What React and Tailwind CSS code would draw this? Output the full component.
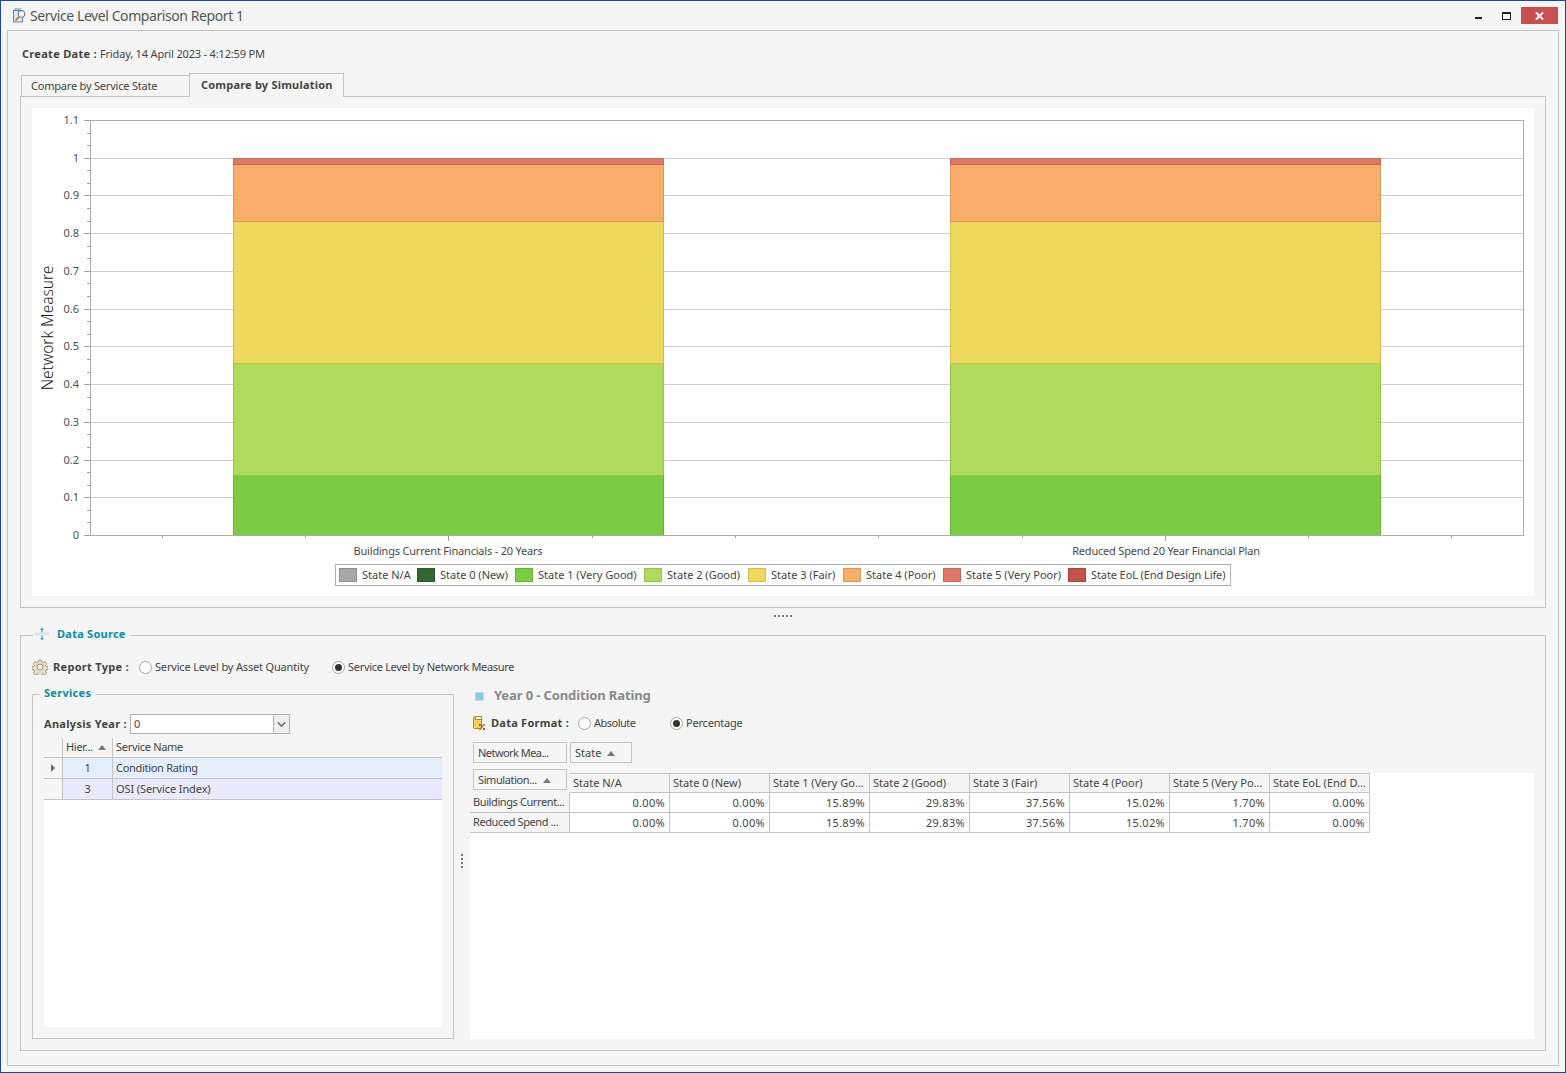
import { ChevronDown } from 'lucide-react';

const rows = [
  { name: 'Buildings Current...', values: ['0.00%', '0.00%', '15.89%', '29.83%', '37.56%', '15.02%', '1.70%', '0.00%'] },
  { name: 'Reduced Spend ...', values: ['0.00%', '0.00%', '15.89%', '29.83%', '37.56%', '15.02%', '1.70%', '0.00%'] },
];
const columns = ['State N/A', 'State 0 (New)', 'State 1 (Very Go...', 'State 2 (Good)', 'State 3 (Fair)', 'State 4 (Poor)', 'State 5 (Very Po...', 'State EoL (End D...'];

const legend = [
  { label: 'State N/A', fill: '#a5a8aa', line: '#8e9193', width: 'w-[78px]' },
  { label: 'State 0 (New)', fill: '#336633', line: '#2b5a2b', width: 'w-[98px]' },
  { label: 'State 1 (Very Good)', fill: '#7acc45', line: '#69b13a', width: 'w-[129px]' },
  { label: 'State 2 (Good)', fill: '#aedb5a', line: '#98c24c', width: 'w-[104px]' },
  { label: 'State 3 (Fair)', fill: '#eed95c', line: '#d3bf4d', width: 'w-[95px]' },
  { label: 'State 4 (Poor)', fill: '#f7ae6a', line: '#d99758', width: 'w-[100px]' },
  { label: 'State 5 (Very Poor)', fill: '#e0786a', line: '#c66a5d', width: 'w-[125px]' },
  { label: 'State EoL (End Design Life)', fill: '#c2524a', line: '#a9463f', width: 'w-[162px] tracking-[-0.1px]' },
];

const segments = [
  { from: 0, to: 0.1589, fill: '#7acc45', line: '#69b13a' },
  { from: 0.1589, to: 0.4572, fill: '#aedb5a', line: '#98c24c' },
  { from: 0.4572, to: 0.8328, fill: '#eed95c', line: '#d3bf4d' },
  { from: 0.8328, to: 0.983, fill: '#f7ae6a', line: '#d99758' },
  { from: 0.983, to: 1, fill: '#e0786a', line: '#c66a5d' },
];

// chart coordinates are relative to the white chart box
const X0 = 58;
const X1 = 1491.5;
const Y0 = 427;
const yOf = (v) => Math.round(Y0 - v * 377.27);
const yLabels = ['0', '0.1', '0.2', '0.3', '0.4', '0.5', '0.6', '0.7', '0.8', '0.9', '1', '1.1'];
const xTicks = [130, 273, 416, 560, 703, 846, 990, 1133, 1276, 1419];

function Chart() {
  return (
    <svg width="1502" height="456" className="block">
      {yLabels.slice(1, 11).map((_, i) => (
        <line key={i} x1={X0} x2={X1} y1={yOf((i + 1) / 10) + 0.5} y2={yOf((i + 1) / 10) + 0.5} stroke="#cfcfcf" />
      ))}
      {[201, 918].map((x) =>
        segments.map((s) => (
          <rect key={x + s.fill} x={x + 0.5} y={yOf(s.to) + 0.5} width={430} height={yOf(s.from) - yOf(s.to)} fill={s.fill} stroke={s.line} strokeWidth="1" />
        )),
      )}
      <rect x={X0 + 0.5} y={12.5} width={1433} height={415} fill="none" stroke="#ababab" />
      {Array.from({ length: 34 }, (_, i) => {
        const major = i % 3 === 0;
        const y = yOf(i / 30) + 0.5;
        return <line key={i} x1={major ? 52 : 55} x2={X0} y1={y} y2={y} stroke="#a0a0a0" />;
      })}
      {xTicks.map((x) => (
        <line key={x} x1={x + 0.5} x2={x + 0.5} y1={427} y2={x === 416 || x === 1133 ? 433 : 430} stroke="#a0a0a0" />
      ))}
      {yLabels.map((label, i) => (
        <text key={label} x="47" y={yOf(i / 10) + 4} textAnchor="end" fontSize="11" fill="#4a4f58">
          {label}
        </text>
      ))}
      <text transform="translate(20.5 220) rotate(-90)" textAnchor="middle" fontSize="15.5" fontWeight="300" fill="#222">
        Network Measure
      </text>
      <text x="416" y="447" textAnchor="middle" fontSize="11" letterSpacing="-0.2" fill="#4a4a4a">
        Buildings Current Financials - 20 Years
      </text>
      <text x="1134" y="447" textAnchor="middle" fontSize="11" letterSpacing="-0.2" fill="#4a4a4a">
        Reduced Spend 20 Year Financial Plan
      </text>
    </svg>
  );
}

function Radio({ checked, label, className }) {
  return (
    <div className={`flex items-center gap-[3px] ${className || ''}`}>
      <span className="flex h-[13px] w-[13px] items-center justify-center rounded-full border border-[#a8a8a8] bg-white">
        {checked && <span className="h-[7px] w-[7px] rounded-full bg-[#333]" />}
      </span>
      <span>{label}</span>
    </div>
  );
}

function SortUp() {
  return <span className="h-0 w-0 border-x-[4px] border-b-[5px] border-x-transparent border-b-[#777]" />;
}

function FieldChip({ label, sort, className }) {
  return (
    <div className={`flex h-[21px] items-center gap-[6px] border border-[#c4c4c4] bg-[#f5f5f5] pl-[4px] pt-px ${className || ''}`}>
      <span>{label}</span>
      {sort && <SortUp />}
    </div>
  );
}

function ReportIcon() {
  return (
    <svg width="14" height="15" viewBox="0 0 14 15" className="shrink-0">
      <rect x="1.5" y="2.5" width="9" height="11.5" fill="#dde8f5" stroke="#5b86b8" />
      <path d="M3 2.5v-1.5h6" fill="none" stroke="#5b86b8" />
      <circle cx="9.5" cy="6" r="3.4" fill="#fff" stroke="#666" />
      <path d="M7 8.6 3.5 12.6" stroke="#b08a4a" strokeWidth="2" />
    </svg>
  );
}

function DataSourceIcon() {
  return (
    <svg width="14" height="14" viewBox="0 0 14 14" className="shrink-0">
      <rect x="0" y="5.5" width="14" height="3" fill="#dfe3e8" />
      <path d="M7 .5 9 3H7.6v2.5H6.4V3H5zM7 13.5 5 11h1.4V8.5h1.2V11H9z" fill="#4aa0e8" />
    </svg>
  );
}

function GearIcon() {
  return (
    <svg width="16" height="16" viewBox="0 0 16 16" className="shrink-0">
      <path
        d="M6.5.8h3l.4 2 1.3.6 1.8-1.1 2 2-1.1 1.8.6 1.3 2 .4v3l-2 .4-.6 1.3 1.1 1.8-2 2-1.8-1.1-1.3.6-.4 2h-3l-.4-2-1.3-.6-1.8 1.1-2-2 1.1-1.8-.6-1.3-2-.4v-3l2-.4.6-1.3-1.1-1.8 2-2 1.8 1.1 1.3-.6z"
        fill="#e6dccb"
        stroke="#a8957a"
        transform="translate(.4 .4) scale(.95)"
      />
      <circle cx="8" cy="8" r="3" fill="#f7f4ee" stroke="#a8957a" />
    </svg>
  );
}

function FormatIcon() {
  return (
    <svg width="13" height="15" viewBox="0 0 13 15" className="shrink-0">
      <rect x="0.5" y="0.5" width="8" height="12" rx="1" fill="#f3cf5b" stroke="#b58a2a" />
      <rect x="2.5" y="0.5" width="6" height="3" fill="#fff6d0" stroke="#b58a2a" />
      <path d="M6.5 14 11.5 8" stroke="#b5562a" strokeWidth="1.2" />
      <rect x="6" y="8" width="2" height="2" fill="#b5562a" />
      <rect x="10" y="12" width="2" height="2" fill="#b5562a" />
    </svg>
  );
}

export default function App() {
  return (
    <div className="flex h-[1073px] w-[1566px] flex-col overflow-hidden border border-[#1a4a94] bg-[#f5f5f5] font-['Noto_Sans',sans-serif] text-[11px] text-[#444]">
      {/* title bar */}
      <div className="flex h-[29px] shrink-0 items-center pl-[11px] pr-[7px]">
        <ReportIcon />
        <span className="ml-[4px] text-[14px] tracking-[-0.42px] text-[#555]">Service Level Comparison Report 1</span>
        <div className="ml-auto flex items-center gap-px">
          <button type="button" className="flex h-[17px] w-[27px] items-center justify-center pt-[5px]">
            <span className="h-[2px] w-[7px] bg-[#222]" />
          </button>
          <button type="button" className="flex h-[17px] w-[27px] items-center justify-center">
            <span className="h-[8px] w-[9px] border border-t-2 border-[#222]" />
          </button>
          <button type="button" className="flex h-[17px] w-[37px] items-center justify-center bg-[#c75050]">
            <svg width="9" height="8" viewBox="0 0 9 8">
              <path d="M1 .5 8 7.5M8 .5 1 7.5" stroke="#fff" strokeWidth="2" />
            </svg>
          </button>
        </div>
      </div>

      {/* main panel */}
      <div className="mx-[6px] mb-[6px] flex flex-1 flex-col border border-[#c4c4c4] px-[12px]">
        <div className="flex h-[42px] shrink-0 items-center gap-[3px] pl-[2px] pt-[4px]">
          <span className="font-bold tracking-[0.3px]">Create Date :</span>
          <span className="tracking-[-0.17px]">Friday, 14 April 2023 - 4:12:59 PM</span>
        </div>

        <div className="flex h-[23px] shrink-0 items-end pl-px">
          <div className="flex h-[21px] w-[168px] items-center border-l border-t border-[#c4c4c4] pl-[9px] pt-px tracking-[-0.2px]">Compare by Service State</div>
          <div className="relative z-10 -mb-px flex h-[24px] w-[155px] items-center border-x border-t border-[#c4c4c4] bg-[#f5f5f5] pl-[11px] font-bold tracking-[0.2px]">
            Compare by Simulation
          </div>
        </div>

        <div className="h-[512px] shrink-0 border border-[#c4c4c4] p-[11px]">
          <div className="h-[488px] bg-white">
            <Chart />
            <div className="flex justify-center">
              <div className="flex h-[22px] w-[896px] items-center border border-[#b0b0b0] pl-[3px]">
                {legend.map((item) => (
                  <div key={item.label} className={`flex shrink-0 items-center gap-[5px] ${item.width}`}>
                    <span className="h-[14px] w-[18px] border" style={{ backgroundColor: item.fill, borderColor: item.line }} />
                    <span>{item.label}</span>
                  </div>
                ))}
              </div>
            </div>
          </div>
        </div>

        {/* horizontal splitter */}
        <div className="flex h-[27px] shrink-0 justify-center gap-[2px] pt-[7px]">
          {[0, 1, 2, 3, 4].map((i) => (
            <span key={i} className="h-[2px] w-[2px] bg-[#777]" />
          ))}
        </div>

        {/* data source */}
        <div className="relative mb-[14px] flex flex-1 flex-col border border-[#c4c4c4] pl-[11px]">
          <div className="absolute -top-[10px] left-[12px] flex h-[16px] w-[98px] items-center gap-[8px] bg-[#f5f5f5] pl-[2px] font-bold tracking-[0.25px] text-[#0b8ca5]">
            <DataSourceIcon />
            <span>Data Source</span>
          </div>

          <div className="mt-[21px] flex h-[20px] items-center">
            <GearIcon />
            <span className="ml-[5px] w-[86px] font-bold tracking-[0.3px]">Report Type :</span>
            <Radio label="Service Level by Asset Quantity" className="w-[193px] tracking-[-0.17px]" />
            <Radio checked label="Service Level by Network Measure" className="tracking-[-0.3px]" />
          </div>

          <div className="mt-[17px] flex">
            {/* services */}
            <div className="relative flex h-[345px] w-[422px] shrink-0 flex-col border border-[#c4c4c4] px-[11px] pb-[11px] pt-[19px]">
              <div className="absolute -top-[10px] left-[6px] bg-[#f5f5f5] px-[5px] font-bold tracking-[0.3px] text-[#0b8ca5]">Services</div>
              <div className="flex h-[20px] items-center">
                <span className="w-[86px] font-bold tracking-[0.3px]">Analysis Year :</span>
                <div className="flex h-[20px] w-[160px] border border-[#b0b0b0] bg-white">
                  <span className="flex-1 pl-[3px] leading-[18px]">0</span>
                  <span className="flex w-[16px] items-center justify-center border-l border-[#b0b0b0] bg-[#eee]">
                    <ChevronDown size={13} strokeWidth={3} className="text-[#777]" />
                  </span>
                </div>
              </div>
              <div className="mt-[4px] flex flex-1 flex-col bg-white tracking-[-0.3px]">
                <div className="flex h-[20px] border-b border-[#c4c4c4] bg-[#f5f5f5]">
                  <span className="w-[19px] border-r border-[#c4c4c4]" />
                  <span className="flex w-[50px] items-center gap-[5px] border-r border-[#c4c4c4] pl-[3px]">
                    Hier...
                    <SortUp />
                  </span>
                  <span className="flex items-center pl-[3px]">Service Name</span>
                </div>
                <div className="flex h-[21px] border-b border-[#c4c4c4] bg-[#e3f0fb]">
                  <span className="flex w-[19px] items-center justify-center border-r border-[#c4c4c4] bg-[#f5f5f5]">
                    <span className="h-0 w-0 border-y-[4px] border-l-[4px] border-y-transparent border-l-[#666]" />
                  </span>
                  <span className="flex w-[50px] items-center justify-center border-r border-[#c4c4c4]">1</span>
                  <span className="flex items-center pl-[3px]">Condition Rating</span>
                </div>
                <div className="flex h-[21px] border-b border-[#c4c4c4] bg-[#e9e9fb]">
                  <span className="w-[19px] border-r border-[#c4c4c4] bg-[#f5f5f5]" />
                  <span className="flex w-[50px] items-center justify-center border-r border-[#c4c4c4]">3</span>
                  <span className="flex items-center pl-[3px] tracking-[-0.1px]">OSI (Service Index)</span>
                </div>
              </div>
            </div>

            {/* vertical splitter */}
            <div className="flex w-[16px] shrink-0 flex-col items-center justify-center gap-[2px] pb-[12px]">
              {[0, 1, 2, 3].map((i) => (
                <span key={i} className="h-[2px] w-[2px] bg-[#777]" />
              ))}
            </div>

            {/* pivot */}
            <div className="-mt-[8px] flex h-[353px] w-[1064px] flex-col">
              <div className="flex h-[20px] items-center pl-[5px]">
                <span className="h-[9px] w-[9px] border border-[#b5dcef] bg-[#8ccbe8]" />
                <span className="ml-[10px] text-[13px] font-bold tracking-[-0.12px] text-[#8a8a8a]">Year 0 - Condition Rating</span>
              </div>
              <div className="mt-[7px] flex h-[20px] items-center pl-[3px]">
                <FormatIcon />
                <span className="ml-[5px] w-[87px] font-bold tracking-[0.25px]">Data Format :</span>
                <Radio label="Absolute" className="w-[92px] tracking-[-0.5px]" />
                <Radio checked label="Percentage" className="tracking-[-0.2px]" />
              </div>
              <div className="mt-[9px] flex gap-[3px] pl-[3px]">
                <FieldChip label="Network Mea..." className="w-[94px] tracking-[-0.55px]" />
                <FieldChip label="State" sort className="w-[62px]" />
              </div>
              <div className="mt-[10px] flex-1 bg-white">
                <div className="grid w-[900px] grid-cols-[100px_repeat(8,100px)]">
                  <div className="h-[20px] bg-[#f5f5f5] pl-[3px]">
                    <FieldChip label="Simulation..." sort className="-mt-[4px] w-[94px] tracking-[-0.4px]" />
                  </div>
                  {columns.map((c) => (
                    <div key={c} className="flex h-[20px] items-center whitespace-nowrap border-b border-r border-t border-[#c4c4c4] bg-[#f5f5f5] pl-[3px] first:border-l">
                      {c}
                    </div>
                  ))}
                  {rows.map((row) => [
                    <div key={row.name} className="flex h-[20px] items-center overflow-hidden whitespace-nowrap border-b border-r border-[#c4c4c4] bg-[#f5f5f5] pl-[3px] tracking-[-0.4px]">
                      {row.name}
                    </div>,
                    ...row.values.map((v, i) => (
                      <div key={row.name + i} className="flex h-[20px] items-center justify-end border-b border-r border-[#c4c4c4] pr-[4px] pt-px tracking-[0.3px]">
                        {v}
                      </div>
                    )),
                  ])}
                </div>
              </div>
            </div>
          </div>
        </div>
      </div>
    </div>
  );
}
